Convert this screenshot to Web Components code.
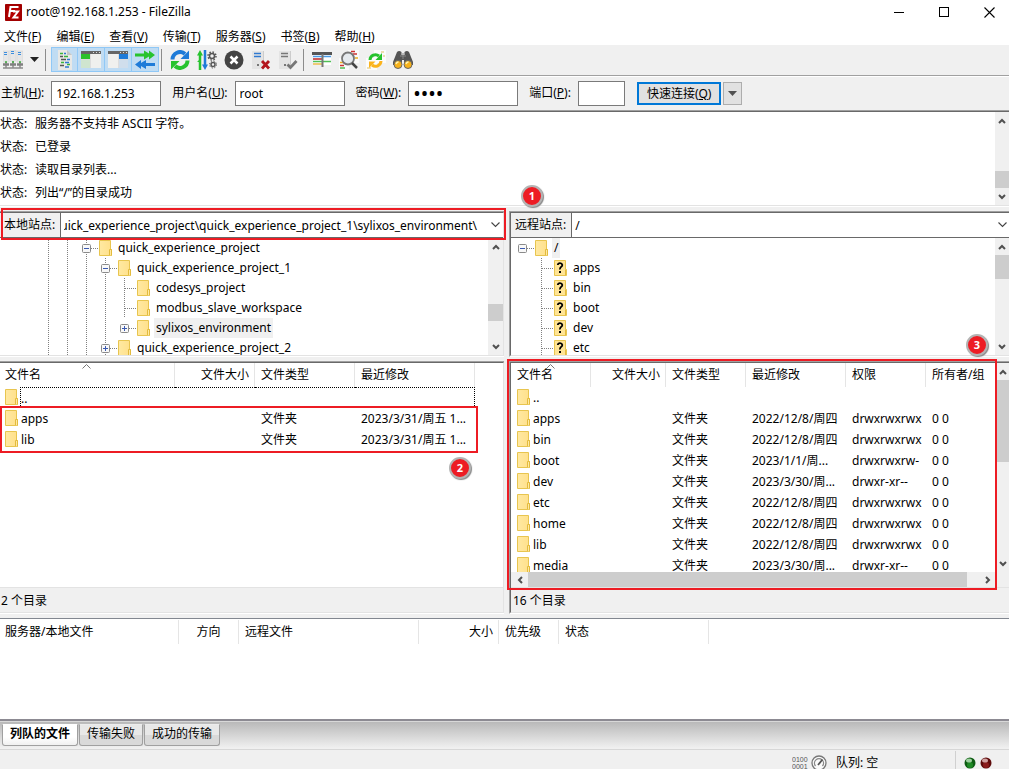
<!DOCTYPE html>
<html lang="zh-CN">
<head>
<meta charset="utf-8">
<title>root@192.168.1.253 - FileZilla</title>
<style>
  html, body { margin: 0; height: 100%; }
  body { font: 12px/20px "Noto Sans", "Noto Sans CJK SC", sans-serif; color: #000; background: #f0f0f0; overflow: hidden; }
</style>
</head>
<body>
<ftp-window></ftp-window>
<script>
const BASE = `<style>
  *, *::before, *::after { box-sizing: border-box; }
  :host { display: block; min-width: 0; min-height: 0; }
  button, input { font: inherit; color: inherit; margin: 0; padding: 0; border: 0; border-radius: 0; background: none; outline: 0; }
  svg { display: block; flex: none; }
</style>`;

function define(name, render) {
  customElements.define(name, class extends HTMLElement {
    constructor() {
      super();
      this.attachShadow({ mode: "open" });
    }
    connectedCallback() {
      const t = document.createElement("template");
      t.innerHTML = BASE + render(this);
      this.shadowRoot.replaceChildren(t.content.cloneNode(true));
    }
  });
}

/* ---------- icons ---------- */
const server = (x, y) => `<rect x="${x}" y="${y}" width="6" height="11" fill="#e6e6e6" stroke="#cfcfcf" stroke-width=".5"/><path d="M${x + 1} ${y + 1.5}h3M${x + 1} ${y + 3.5}h3" stroke="#3a8dde"/>`;
const ICONS = {
  logo: [17, 17, `<rect width="17" height="17" rx="1" fill="#b40000"/><rect x="1" y="1" width="15" height="15" fill="none" stroke="#8e0000"/><path d="M4 13 5.500 3H13.500M5 7H10M8 7.500H13L8.500 13.500H13.500" fill="none" stroke="#fff" stroke-width="2"/>`],
  min: [10, 10, `<path d="M0 5.500H10" stroke="#000"/>`],
  max: [10, 10, `<rect x=".5" y=".5" width="9" height="9" fill="none" stroke="#000"/>`],
  close: [11, 11, `<path d="M.5.5 10.500 10.500M10.500.5.5 10.500" stroke="#000" stroke-width="1.100"/>`],
  caret: [9, 5, `<path d="M0 0H9L4.500 5Z" fill="#222"/>`],
  caretgray: [9, 5, `<path d="M0 0H9L4.500 5Z" fill="#505050"/>`],
  sites: [20, 20, `${server(0, 1)}${server(7, 0)}${server(14, 1)}<path d="M3 12V18M10 11V18M17 12V18" stroke="#8a8a8a" stroke-width="1.500"/><path d="M0 18H20" stroke="#8c8c8c" stroke-width="1.500"/><path d="M0 14.500h6M7 14.500h6M14 14.500h6" stroke="#808080" stroke-width="2.500"/><path d="M2 12h2M9 12h2M16 12h2" stroke="#3fae3f" stroke-width="1.500"/>`],
  log: [20, 20, `<path d="M3 0H12L17 5V20H3Z" fill="#e8e8e6"/><path d="M12 0V5H17Z" fill="#c2c6c8"/><path d="M5 3.500H8M9 6.500H13M6 12.500H9M12 14.500H15" stroke="#3ab53a" stroke-width="1.500"/><path d="M5 6.500H8M6 9.500H11M5 15.500H9" stroke="#555" stroke-width="1.500"/><path d="M9 3.500H11M12 9.500H15M10 12.500H14M10 17H14" stroke="#2f79d0" stroke-width="1.500"/>`],
  localtree: [20, 20, `<rect y="1" width="20" height="17" fill="#f0f0ee"/><rect y="1" width="20" height="3" fill="#666"/><path d="M12 2.500h1M15 2.500h1M18 2.500h1" stroke="#ddd"/><rect y="4" width="9" height="5" fill="#2bc22b"/><rect y="10" width="9" height="8" fill="#cfe5cf"/><path d="M9.500 4V18M0 9.500H9" stroke="#ddd"/>`],
  remotetree: [20, 20, `<rect y="1" width="20" height="17" fill="#f0f0ee"/><rect y="1" width="20" height="3" fill="#666"/><path d="M12 2.500h1M15 2.500h1M18 2.500h1" stroke="#ddd"/><rect x="11" y="4" width="9" height="5" fill="#1e7bd8"/><rect x="11" y="10" width="9" height="8" fill="#d0deec"/><path d="M10.500 4V18M11 9.500H20" stroke="#ddd"/>`],
  queue: [20, 20, `<path d="M0 3.500H9V.5L14 3.500V.5L20 5 14 9.500V6.500L9 9.500V6.500H0Z" fill="#27c32e"/><path d="M20 13H11V10L6 13V10L0 14.500 6 19V16L11 19V16H20Z" fill="#1e7bd8"/>`],
  refresh: [20, 20, `<path d="M2.500 9.500A7.500 7.500 0 0 1 15 4" fill="none" stroke="#1e7bd8" stroke-width="4"/><path d="M19 .5V9H10.500Z" fill="#1e7bd8"/><path d="M17.500 10.500A7.500 7.500 0 0 1 5 16" fill="none" stroke="#27c32e" stroke-width="4"/><path d="M1 19.500V11H9.500Z" fill="#27c32e"/>`],
  process: [20, 20, `<path d="M3 20V4" stroke="#27c32e" stroke-width="2.500"/><path d="M0 5.500 3 0 6 5.500ZM0 12H3V9" fill="#27c32e"/><path d="M8 0V15" stroke="#1e7bd8" stroke-width="2.500"/><path d="M5 14.500 8 20 11 14.500Z" fill="#1e7bd8"/><circle cx="15" cy="6" r="2.500" fill="none" stroke="#555" stroke-width="1.500"/><circle cx="15" cy="6" r="4" fill="none" stroke="#555" stroke-width="1.500" stroke-dasharray="1.500 1.640"/><circle cx="16" cy="14.500" r="2" fill="none" stroke="#555" stroke-width="1.500"/><circle cx="16" cy="14.500" r="3.500" fill="none" stroke="#555" stroke-dasharray="1.300 1.450"/>`],
  cancel: [20, 20, `<circle cx="10" cy="10" r="9.500" fill="#444"/><path d="M6.500 6.500 13.500 13.500M13.500 6.500 6.500 13.500" stroke="#fff" stroke-width="2.500"/>`],
  disconnect: [20, 20, `<rect x="1" y="1" width="12" height="18" fill="#e4e4e4"/><path d="M12.500 1V19" stroke="#ccc"/><path d="M3 3.500H10M3 6.500H10" stroke="#2f79d0" stroke-width="1.500"/><circle cx="7" cy="15" r="1" fill="#555"/><path d="M11 11 18 18.500M18 11 11 18.500" stroke="#b3151d" stroke-width="2.800"/>`],
  reconnect: [20, 20, `<rect x="1" y="1" width="12" height="18" fill="#e4e4e4"/><path d="M12.500 1V19" stroke="#ccc"/><path d="M3 3.500H10M3 6.500H10" stroke="#777" stroke-width="1.500"/><circle cx="7" cy="15" r="1" fill="#555"/><path d="M9.500 14.500 12.500 17.500 18.500 11" fill="none" stroke="#777" stroke-width="2.800"/>`],
  filter: [20, 20, `<path d="M1 5H19V15H1Z" fill="#fff"/><path d="M0 3.500H20" stroke="#555" stroke-width="3"/><path d="M1 6.500H19" stroke="#4a9be6" stroke-width="1.500"/><path d="M1 9H10" stroke="#b22" stroke-width="1.500"/><path d="M1 11.500H19" stroke="#4fbf54" stroke-width="1.500"/><path d="M1 14H10" stroke="#e8b84a" stroke-width="1.500"/><path d="M10.500 4V17" stroke="#777" stroke-width="2"/>`],
  compare: [20, 20, `<path d="M9 0H20V13H9Z" fill="#fafafa"/><path d="M0 8H10V20H0Z" fill="#fafafa"/><path d="M12 1.500H16M14 4H18M1 15.500H5" stroke="#c33" stroke-width="1.300"/><path d="M1 12.500H4M16 8H19" stroke="#e8b020" stroke-width="1.300"/><path d="M1 18H6" stroke="#3ab53a" stroke-width="1.300"/><circle cx="9" cy="8.500" r="6" fill="#e6eaee" stroke="#777" stroke-width="1.800"/><path d="M13 13 18 18" stroke="#444" stroke-width="2.500"/>`],
  sync: [20, 20, `<path d="M8 0H20V13H8Z" fill="#fcfcfc"/><path d="M0 8H11V20H0Z" fill="#fcfcfc"/><path d="M15 2H18M17 6H19M1 18H5" stroke="#e0c060"/><path d="M4 10A5.500 5.500 0 0 1 13 6" fill="none" stroke="#27c32e" stroke-width="3"/><path d="M16 3V10H9.500Z" fill="#27c32e"/><path d="M15 11A5.500 5.500 0 0 1 6 15" fill="none" stroke="#fbb31c" stroke-width="3"/><path d="M3 18V11.500H9.500Z" fill="#fbb31c"/>`],
  find: [20, 20, `<path d="M4 2Q6 0 8.500 2V5H11.500V2Q14 0 16 2L20 12V15H11V10H9V15H0V12Z" fill="#555"/><path d="M7 6H13M10 3V9" stroke="#888"/><circle cx="5" cy="14.500" r="4" fill="#f7b21b" stroke="#666"/><circle cx="15" cy="14.500" r="4" fill="#f7b21b" stroke="#666"/><path d="M3 14Q3.500 12 5.500 12M13 14Q13.500 12 15.500 12" fill="none" stroke="#fff3b0" stroke-width="1.300"/>`],
  folder: [14, 16, `<defs><linearGradient id="g" x1="0" x2="1"><stop offset="0" stop-color="#ffe9a2"/><stop offset="1" stop-color="#ffe08a"/></linearGradient></defs><path d="M.5.5H11.500V9.500H12.500V15.500H.5Z" fill="url(#g)" stroke="#e8c54f"/><path d="M10.500 15V9.500H12.500V15.500" fill="#ffe9a2" stroke="#e3bb3e"/>`],
  unknown: [14, 16, `<path d="M.5.5H11.500V9.500H12.500V15.500H.5Z" fill="#ffe495" stroke="#e8c54f"/><path d="M11.500 15V10" stroke="#e3bb3e"/><path d="M3.800 5Q4 3.200 6 3.200T8.300 5Q8.300 6.200 7 7T6 9.500" fill="none" stroke="#000" stroke-width="1.800"/><rect x="5" y="11" width="2" height="2"/>`],
  plus: [9, 9, `<rect x=".5" y=".5" width="8" height="8" rx="1" fill="#f8f8f8" stroke="#8a8a8a"/><path d="M2 4.500H7M4.500 2V7" stroke="#3a59b0"/>`],
  minus: [9, 9, `<rect x=".5" y=".5" width="8" height="8" rx="1" fill="#f8f8f8" stroke="#8a8a8a"/><path d="M2 4.500H7" stroke="#3a59b0"/>`],
  sort: [9, 5, `<path d="M.5 4.500 4.500.5 8.500 4.500" fill="none" stroke="#777"/>`],
  up: [8, 6, `<path d="M1 5 4 2 7 5" fill="none" stroke="#505050" stroke-width="2"/>`],
  down: [8, 6, `<path d="M1 1 4 4 7 1" fill="none" stroke="#505050" stroke-width="2"/>`],
  left: [6, 8, `<path d="M5 1 2 4 5 7" fill="none" stroke="#505050" stroke-width="2"/>`],
  right: [6, 8, `<path d="M1 1 4 4 1 7" fill="none" stroke="#505050" stroke-width="2"/>`],
  chevron: [9, 6, `<path d="M.5.5 4.500 4.500 8.500.5" fill="none" stroke="#444" stroke-width="1.100"/>`],
  gauge: [16, 16, `<circle cx="8" cy="8" r="7" fill="#fafafa" stroke="#777" stroke-width="1.300"/><path d="M4.500 11A4.500 4.500 0 1 1 11.500 11" fill="none" stroke="#888" stroke-width="1.300"/><path d="M7 10 11.500 4.500" stroke="#555" stroke-width="1.800"/>`],
  green: [12, 12, `<circle cx="6" cy="6" r="5.500" fill="#0d5c12"/><circle cx="6" cy="8" r="3" fill="#1f8a25"/><ellipse cx="5" cy="3.500" rx="3" ry="2" fill="#9fd0a0"/>`],
  red: [12, 12, `<circle cx="6" cy="6" r="5.500" fill="#5e0b0b"/><circle cx="6" cy="8" r="3" fill="#8a1c1c"/><ellipse cx="5" cy="3.500" rx="3" ry="2" fill="#d0a0a0"/>`],
};
const icon = n => {
  const [w, h, body] = ICONS[n];
  return `<svg width="${w}" height="${h}" viewBox="0 0 ${w} ${h}" aria-hidden="true">${body}</svg>`;
};
const access = s => s.replace(/\((\w)\)/, "(<u>$1</u>)");

/* ---------- small parts ---------- */
define("scroll-bar", el => {
  const h = el.hasAttribute("horizontal");
  const [before, thumb, after] = el.getAttribute("parts").split(" ");
  return `<style>
    :host { display: flex; flex: none; flex-direction: ${h ? "row" : "column"}; background: #f0f0f0; ${h ? "height: 15px" : "width: 15px"}; }
    button { flex: none; display: flex; align-items: center; justify-content: center; ${h ? "width: 17px" : "height: 17px"}; }
    i { min-height: 0; }
    .thumb { background: #cdcdcd; }
  </style>
  <button aria-label="向前滚动">${icon(h ? "left" : "up")}</button>
  <i style="flex:${before} 1 0"></i><i class="thumb" style="flex:${thumb} 1 0"></i><i style="flex:${after} 1 0"></i>
  <button aria-label="向后滚动">${icon(h ? "right" : "down")}</button>`;
});

define("mark-frame", () => `<style>
  :host { position: absolute; z-index: 2; border: 2px solid #ed1c24; pointer-events: none; }
</style>`);

define("mark-badge", () => `<style>
  :host { position: absolute; z-index: 3; width: 22px; height: 22px; border-radius: 50%; background: #ed1c24; border: 2px solid #b4b4b4;
    box-shadow: 1px 1px 1px #888; color: #fff; font: bold 11px/18px "Open Sans", sans-serif; text-align: center; }
</style><slot></slot>`);

/* ---------- window chrome ---------- */
define("title-bar", () => `<style>
  :host { display: flex; align-items: center; height: 24px; padding: 0 14px 0 5px; gap: 4px; background: #fff; }
  h1 { font: inherit; margin: 0; flex: 1; }
  .ctl { display: flex; gap: 35px; }
  button { display: flex; align-items: center; }
</style>
${icon("logo")}<h1>root@192.168.1.253 - FileZilla</h1>
<div class="ctl"><button aria-label="最小化">${icon("min")}</button><button aria-label="最大化">${icon("max")}</button><button aria-label="关闭">${icon("close")}</button></div>`);

define("menu-bar", () => `<style>
  :host { display: flex; height: 21px; padding: 3px 4px 0; gap: 15px; background: #fff; }
  button { line-height: 20px; height: 20px; white-space: nowrap; }
</style>` + ["文件(F)", "编辑(E)", "查看(V)", "传输(T)", "服务器(S)", "书签(B)", "帮助(H)"].map(m => `<button>${access(m)}</button>`).join(""));

define("tool-bar", () => {
  const b = (n, label, on) => `<button aria-label="${label}"${on ? ' class="on" aria-pressed="true"' : ""}>${icon(n)}</button>`;
  return `<style>
  :host { display: flex; align-items: flex-start; height: 32px; padding: 2px 0 0; border-bottom: 1px solid #fff; box-shadow: inset 0 -1px #a0a0a0; }
  button { width: 27px; height: 25px; display: flex; align-items: center; justify-content: center; }
  .sites { width: 26px; }
  .drop { width: 17px; }
  .on { background: #c0dcf3; border: 1px solid #90c8f6; border-left-width: 0; }
  hr + .on { border-left-width: 1px; }
  hr { width: 1px; height: 22px; margin: 2px 5px 0 2px; border: 0; background: #8c8c8c; }
  hr ~ hr { margin-right: 4px; }
</style>
<button class="sites" aria-label="站点管理器">${icon("sites")}</button><button class="drop" aria-label="站点列表">${icon("caret")}</button><hr>
${b("log", "消息日志", 1)}${b("localtree", "本地目录树", 1)}${b("remotetree", "远程目录树", 1)}${b("queue", "传输队列", 1)}<hr>
${b("refresh", "刷新")}${b("process", "处理队列")}${b("cancel", "取消")}${b("disconnect", "断开")}${b("reconnect", "重新连接")}<hr>
${b("filter", "过滤")}${b("compare", "目录比较")}${b("sync", "同步浏览")}${b("find", "查找")}`;
});

define("quick-connect", () => `<style>
  :host { display: flex; height: 35px; border-bottom: 1px solid #696969; box-shadow: inset 0 -1px #a0a0a0; padding-top: 4px; }
  form { display: flex; align-items: center; height: 24px; }
  label { white-space: nowrap; margin: 0 7px 0 11px; }
  label:first-child { margin-left: 1px; }
  input { width: 110px; height: 25px; padding: 0 4px; border: 1px solid #7a7a7a; background: #fff; }
  #pw { font-size: 20px; }
  #port { width: 47px; }
  .go { height: 23px; margin: 0 2px 0 12px; padding: 0 8px; border: 2px solid #0078d7; background: #e1e1e1; line-height: 19px; white-space: nowrap; }
  .drop { width: 19px; height: 23px; border: 1px solid #adadad; background: #e1e1e1; display: flex; align-items: center; justify-content: center; }
</style>
<form onsubmit="return false">
<label for="host">主机(<u>H</u>):</label><input id="host" value="192.168.1.253">
<label for="user">用户名(<u>U</u>):</label><input id="user" value="root">
<label for="pw">密码(<u>W</u>):</label><input id="pw" type="password" value="root">
<label for="port">端口(<u>P</u>):</label><input id="port">
<button class="go">快速连接(<u>Q</u>)</button><button class="drop" type="button" aria-label="历史">${icon("caretgray")}</button>
</form>`);

define("message-log", () => `<style>
  :host { display: flex; height: 95px; background: #fff; border-bottom: 1px solid #fff; box-shadow: inset 0 -1px #e3e3e3; padding-bottom: 1px; }
  dl { flex: 1; margin: 0; display: grid; grid-template-columns: 35px 1fr; grid-auto-rows: 23px; line-height: 23px; }
  dt, dd { margin: 0; white-space: nowrap; }
  scroll-bar { width: 14px; }
</style>
<dl>${["服务器不支持非 ASCII 字符。", "已登录", "读取目录列表...", "列出“/”的目录成功"].map(t => `<dt>状态:</dt><dd>${t}</dd>`).join("")}</dl>
<scroll-bar parts="42 17 0"></scroll-bar>`);

/* ---------- directory panes ---------- */
const TREES = {
  local: [
    ["||", "-", "folder", "quick_experience_project"],
    ["|||", "-", "folder", "quick_experience_project_1"],
    ["||||", "├", "folder", "codesys_project"],
    ["||||", "├", "folder", "modbus_slave_workspace"],
    ["||||", "+", "folder", "sylixos_environment", 1],
    ["|||", "+", "folder", "quick_experience_project_2"],
  ],
  remote: [
    ["", "-", "folder", "/", 1],
    [" ", "├", "unknown", "apps"], [" ", "├", "unknown", "bin"], [" ", "├", "unknown", "boot"],
    [" ", "├", "unknown", "dev"], [" ", "├", "unknown", "etc"],
  ],
};
define("site-tree", el => {
  const kind = el.getAttribute("kind");
  const rows = TREES[kind].map(([guides, node, ic, text, sel]) => `<li role="treeitem">${
    [...guides].map(g => `<i class="${g === "|" ? "v" : ""}"></i>`).join("")
  }<i class="h ${node === "├" ? "v" : ""} ${kind === "local" && guides.length < 4 ? "v" : ""}">${node === "+" ? icon("plus") : node === "-" ? icon("minus") : ""}</i><i class="ic">${icon(ic)}</i><span class="${sel ? "sel" : ""}">${text}</span></li>`).join("");
  return `<style>
  :host { display: flex; flex-direction: column; background: #fff; border-top: 1px solid #a0a0a0; border-bottom: 1px solid #fff; }
  .in { flex: 1; min-height: 0; display: flex; flex-direction: column; border: 0 solid #e3e3e3; border-top: 1px solid #696969; border-bottom-width: 1px; }
  :host([kind="local"]) .in { border-right-width: 1px; }
  :host([kind="remote"]) .in { border-left: 1px solid #696969; }
  :host([kind="remote"]) { border-left: 1px solid #a0a0a0; }
  .path { flex: none; display: flex; height: 25px; border-bottom: 1px solid #696969; }
  label { background: #f0f0f0; line-height: 23px; padding: 0 5px 0 4px; border-right: 1px solid #696969; white-space: nowrap; }
  .path input { flex: 1; min-width: 0; padding: 0 3px; height: 24px; }
  :host([kind="local"]) .path input { text-indent: -4px; }
  .path button { width: 15px; display: flex; align-items: center; justify-content: center; }
  :host([kind="remote"]) .path button { width: 13px; }
  .view { flex: 1; min-height: 0; display: flex; }
  ul { flex: 1; min-width: 0; margin: 0; padding: 0 0 0 2px; list-style: none; overflow: hidden; }
  :host([kind="local"]) ul { padding-left: 39px; }
  li { display: flex; height: 20px; }
  i { position: relative; flex: none; width: 19px; display: flex; align-items: center; justify-content: center; }
  .v { background: repeating-linear-gradient(#808080 0 1px, transparent 1px 2px) 9px 0 / 1px 100% no-repeat; }
  .h::after { content: ""; position: absolute; left: 10px; right: -2px; top: 10px; height: 1px; background: repeating-linear-gradient(90deg, #808080 0 1px, transparent 1px 2px); }
  .h svg { position: relative; z-index: 1; }
  span { margin-left: 1px; padding: 0 2px; white-space: nowrap; }
  .sel { background: #f0f0f0; }
  :host([kind="remote"]) scroll-bar { width: 14px; }
</style>
<div class="in"><div class="path">
  <label for="p">${kind === "local" ? "本地站点:" : "远程站点:"}</label>
  <input id="p" value="${kind === "local" ? "uick_experience_project\\quick_experience_project_1\\sylixos_environment\\" : "/"}">
  <button aria-label="展开">${icon("chevron")}</button>
</div>
<div class="view"><ul role="tree">${rows}</ul><scroll-bar parts="${kind === "local" ? "49 17 17" : "0 24 59"}"></scroll-bar></div></div>`;
});

const D = "2022/12/8/周四", R = "drwxrwxrwx";
const LISTS = {
  local: {
    cols: [["文件名", 175], ["文件大小", 80, "r"], ["文件类型", 100], ["最近修改", 120]],
    rows: [[".."], ["apps", "", "文件夹", "2023/3/31/周五 1..."], ["lib", "", "文件夹", "2023/3/31/周五 1..."]],
    status: "2 个目录",
  },
  remote: {
    cols: [["文件名", 80], ["文件大小", 75, "r"], ["文件类型", 80], ["最近修改", 100], ["权限", 80], ["所有者/组", 70]],
    rows: [[".."], ["apps", "", "文件夹", D, R, "0 0"], ["bin", "", "文件夹", D, R, "0 0"], ["boot", "", "文件夹", "2023/1/1/周...", "drwxrwxrw-", "0 0"],
      ["dev", "", "文件夹", "2023/3/30/周...", "drwxr-xr--", "0 0"], ["etc", "", "文件夹", D, R, "0 0"], ["home", "", "文件夹", D, R, "0 0"],
      ["lib", "", "文件夹", D, R, "0 0"], ["media", "", "文件夹", "2023/3/30/周...", "drwxr-xr--", "0 0"]],
    status: "16 个目录",
  },
};
const TABLE = `
  table { border-collapse: separate; border-spacing: 0; table-layout: fixed; width: 0; }
  th { position: relative; font-weight: 400; text-align: left; height: 24px; padding: 0 6px; border-right: 1px solid #e5e5e5; white-space: nowrap; line-height: 24px; }
  th.r { text-align: right; padding-right: 5px; }
  th.c { text-align: center; }
  td { height: 21px; line-height: 21px; padding: 0 0 0 6px; white-space: nowrap; }
`;
define("file-list", el => {
  const kind = el.getAttribute("kind"), L = LISTS[kind];
  return `<style>${TABLE}
  :host { display: flex; flex-direction: column; border-top: 1px solid #a0a0a0; border-bottom: 1px solid #fff; }
  :host([kind="remote"]) { border-left: 1px solid #a0a0a0; }
  .in { flex: 1; min-height: 0; display: flex; flex-direction: column; border-top: 1px solid #696969; border-bottom: 1px solid #e3e3e3; }
  :host([kind="local"]) .in { border-right: 1px solid #e3e3e3; }
  :host([kind="remote"]) .in { border-left: 1px solid #696969; }
  .view { flex: 1; min-height: 0; display: flex; background: #fff; }
  .main { flex: 1; min-width: 0; display: flex; flex-direction: column; }
  .clip { flex: 1; min-height: 0; overflow: hidden; }
  .name { display: flex; align-items: center; gap: 2px; }
  .name svg { height: 18px; padding-bottom: 2px; }
  :host([kind="local"]) th:first-child, :host([kind="local"]) td:first-child { padding-left: 5px; }
  :host([kind="local"]) tbody tr:first-child .name span { flex: 1; border: 1px dotted #000; border-width: 1px 0 0 1px; height: 21px; }
  :host([kind="local"]) tbody tr:first-child .name { gap: 1px; }
  :host([kind="local"]) tbody tr:first-child td + td { border-top: 1px dotted #000; }
  :host([kind="local"]) tbody tr:first-child td:last-child { border-right: 1px dotted #000; }
  th svg { position: absolute; top: 1px; left: 50%; margin-left: -5px; }
  scroll-bar:not([horizontal]) { width: 13px; border-bottom: 15px solid #f0f0f0; }
  footer { flex: none; height: 25px; line-height: 26px; padding-left: 1px; border-top: 1px solid #e3e3e3; }
  :host([kind="remote"]) footer { padding-left: 2px; }
</style>
<div class="in"><div class="view"><div class="main"><div class="clip"><table>
<colgroup>${L.cols.map(c => `<col style="width:${c[1]}px">`).join("")}</colgroup>
<thead><tr>${L.cols.map((c, i) => `<th class="${c[2] || ""}">${c[0]}${i ? "" : icon("sort")}</th>`).join("")}</tr></thead>
<tbody>${L.rows.map(r => `<tr>${L.cols.map((c, i) => i ? `<td>${r[i] || ""}</td>` : `<td><div class="name">${icon("folder")}<span>${r[0]}</span></div></td>`).join("")}</tr>`).join("")}</tbody>
</table></div>${kind === "remote" ? '<scroll-bar horizontal parts="0 438 12"></scroll-bar>' : ""}</div>
${kind === "remote" ? '<scroll-bar parts="0 81 92"></scroll-bar>' : ""}</div>
<footer>${L.status}</footer></div>`;
});

define("split-pane", () => `<style>
  :host { display: grid; grid-template-columns: 504fr 5px 500fr; position: relative; }
  ::slotted([slot="right"]) { grid-column: 3; }
</style><slot name="left"></slot><slot name="right"></slot><slot></slot>`);

/* ---------- queue and status ---------- */
define("queue-view", () => `<style>${TABLE}
  :host { background: #fff; border-top: 1px solid #828790; border-bottom: 2px solid #8c8a92; padding-top: 1px; overflow: hidden; }
  th:first-child { padding-left: 5px; }
</style>
<table><colgroup>${[179, 60, 180, 80, 60, 150].map(w => `<col style="width:${w}px">`).join("")}</colgroup>
<thead><tr><th>服务器/本地文件</th><th class="c">方向</th><th>远程文件</th><th class="r">大小</th><th>优先级</th><th>状态</th></tr></thead></table>`);

define("queue-tabs", () => `<style>
  :host { display: flex; align-items: flex-start; height: 28px; padding: 2px 0 0 2px; background: linear-gradient(#b9b9b9, #f0f0f0 26px); border-top: 1px solid #d8d8d8; }
  button { height: 22px; line-height: 18px; padding: 0 7px 3px; border: 1px solid #a0a0a0; border-top-color: #ececec; border-radius: 0 0 3px 3px; background: linear-gradient(#e8e8e8 0 50%, #d9d9d9 50%); white-space: nowrap; }
  .on { font-weight: 700; background: linear-gradient(#fff 60%, #f0f0f0); border-top-color: #fff; }
  button + button { margin-left: 1px; }
</style><button class="on" role="tab">列队的文件</button><button role="tab">传输失败</button><button role="tab">成功的传输</button>`);

define("status-bar", () => `<style>
  :host { display: flex; align-items: center; justify-content: flex-end; height: 26px; border-top: 1px solid #d7d7d7; padding-right: 17px; }
  .bin { width: 17px; margin-right: 2px; }
  .q { width: 120px; padding-left: 9px; margin-right: 8px; }
  .leds { display: flex; gap: 4px; border-left: 1px solid #d0d0d0; padding: 6px 0 6px 8px; }
</style>
<svg class="bin" width="17" height="16" fill="#555" font-family="Liberation Sans" font-size="7"><text x="0" y="7">0100</text><text x="0" y="14">0001</text></svg>
${icon("gauge")}<span class="q">队列: 空</span><div class="leds">${icon("green")}${icon("red")}</div>`);

define("ftp-window", () => `<style>
  :host { display: grid; height: 100vh; overflow: hidden; background: #f0f0f0;
    grid-template-rows: auto auto auto auto auto 4px minmax(0, 146fr) 4px minmax(0, 253fr) 4px minmax(0, 103fr) auto 20px; }
  .dirs { grid-row: 7; }
  .files { grid-row: 9; }
  queue-view { grid-row: 11; }
  queue-tabs { grid-row: 12; }
  status-bar { grid-row: 13; }
  .f1 { top: -3px; left: 1px; width: 505px; height: 32px; }
  .b1 { top: -26px; left: 521px; }
  .f2 { top: 45px; left: 0; width: 478px; height: 47px; }
  .b2 { top: 96px; left: 449px; }
  .f3 { top: -2px; left: 507px; right: 12px; bottom: 24px; }
  .b3 { top: -27px; right: 21px; }
</style>
<title-bar></title-bar><menu-bar></menu-bar><tool-bar></tool-bar><quick-connect></quick-connect><message-log></message-log>
<split-pane class="dirs"><site-tree slot="left" kind="local"></site-tree><site-tree slot="right" kind="remote"></site-tree>
  <mark-frame class="f1"></mark-frame><mark-badge class="b1">1</mark-badge></split-pane>
<split-pane class="files"><file-list slot="left" kind="local"></file-list><file-list slot="right" kind="remote"></file-list>
  <mark-frame class="f2"></mark-frame><mark-badge class="b2">2</mark-badge><mark-frame class="f3"></mark-frame><mark-badge class="b3">3</mark-badge></split-pane>
<queue-view></queue-view><queue-tabs></queue-tabs><status-bar></status-bar>`);
</script>
</body>
</html>
